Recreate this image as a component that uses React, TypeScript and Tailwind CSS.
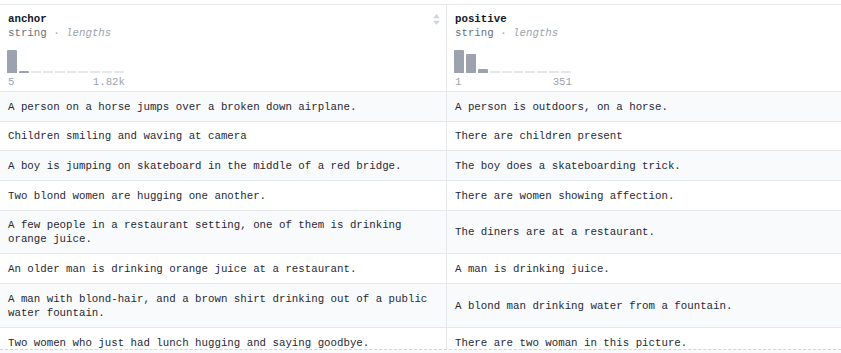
import React from "react"

type Column = {
  name: string
  min: string
  max: string
  bars: number[]
}

const columns: Column[] = [
  { name: "anchor", min: "5", max: "1.82k", bars: [23, 2, 0, 0, 0, 0, 0, 0, 0, 0] },
  { name: "positive", min: "1", max: "351", bars: [23, 19, 4, 0, 0, 0, 0, 0, 0, 0] },
]

const rows: [string, string][] = [
  ["A person on a horse jumps over a broken down airplane.", "A person is outdoors, on a horse."],
  ["Children smiling and waving at camera", "There are children present"],
  ["A boy is jumping on skateboard in the middle of a red bridge.", "The boy does a skateboarding trick."],
  ["Two blond women are hugging one another.", "There are women showing affection."],
  ["A few people in a restaurant setting, one of them is drinking orange juice.", "The diners are at a restaurant."],
  ["An older man is drinking orange juice at a restaurant.", "A man is drinking juice."],
  ["A man with blond-hair, and a brown shirt drinking out of a public water fountain.", "A blond man drinking water from a fountain."],
  ["Two women who just had lunch hugging and saying goodbye.", "There are two woman in this picture."],
]

function SortIcon() {
  return (
    <svg width="7" height="11" viewBox="0 0 7 11" className="absolute top-[9px] right-[6px]">
      <path d="M3.5 0 L7 4.2 L0 4.2 Z" fill="#d1d5db" />
      <path d="M3.5 11 L7 6.8 L0 6.8 Z" fill="#d1d5db" />
    </svg>
  )
}

function Histogram({ bars }: { bars: number[] }) {
  return (
    <div className="flex items-end gap-[2px] h-[23px] w-[117px] mt-[10px] -ml-px">
      {bars.map((h, i) => (
        <div key={i} className="w-[10px] flex flex-col justify-end h-full">
          {h > 0 ? (
            <div className="w-full bg-[#9ca3af] rounded-t-[1px]" style={{ height: h }} />
          ) : (
            <div className="w-full h-[2px] bg-[#e5e7eb]" />
          )}
        </div>
      ))}
    </div>
  )
}

function HeaderCell({ col, showSort }: { col: Column; showSort: boolean }) {
  return (
    <div className="relative w-[447px] shrink-0 border-r border-[#e5e7eb] px-2 pt-[7px] pb-[2px]">
      <div className="font-bold text-[#111827]">{col.name}</div>
      <div className="text-[#6b7280]">
        string <span className="text-[#9ca3af]">·</span> <span className="italic text-[#9ca3af]">lengths</span>
      </div>
      <Histogram bars={col.bars} />
      <div className="flex justify-between w-[117px] mt-[2px] text-[#9ca3af]">
        <span>{col.min}</span>
        <span>{col.max}</span>
      </div>
      {showSort && <SortIcon />}
    </div>
  )
}

export default function App() {
  return (
    <div className="w-[841px] h-[353px] overflow-hidden bg-white text-[10.75px] leading-[14px] text-[#1f2937] font-['Liberation_Mono',monospace]">
      <div className="h-[349px] overflow-hidden pt-[4px]">
        <div className="w-[894px] border-t border-[#e5e7eb]">
          {/* Header */}
          <div className="flex border-b border-[#e5e7eb]">
            {columns.map((c, i) => (
              <HeaderCell key={c.name} col={c} showSort={i === 0} />
            ))}
          </div>

          {/* Rows */}
          {rows.map((r, i) => (
            <div
              key={i}
              className={`flex border-b border-[#e5e7eb] ${i % 2 === 0 ? "bg-[#f9fafb]" : "bg-white"}`}
            >
              {r.map((text, j) => (
                <div
                  key={j}
                  className="w-[447px] shrink-0 border-r border-[#e5e7eb] px-2 pt-[7.7px] pb-[7px] flex items-center"
                >
                  <span>{text}</span>
                </div>
              ))}
            </div>
          ))}
        </div>
      </div>
      <div className="h-[4px] border-t border-dashed border-[#d1d5db] bg-[#f9fafb]" />
    </div>
  )
}
